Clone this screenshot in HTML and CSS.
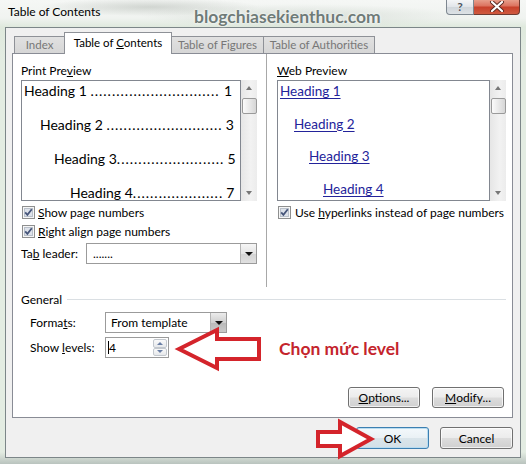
FILE: index.html
```html
<!DOCTYPE html>
<html>
<head>
<meta charset="utf-8">
<title>Table of Contents</title>
<link rel="stylesheet" href="styles.css">
</head>
<body>
<div class="window">
  <div class="titlebar">
    <span class="title">Table of Contents</span>
    <span class="watermark">blogchiasekienthuc.com</span>
    <div class="caption-btns">
      <div class="cap help">?</div>
      <div class="cap close">
        <svg width="16" height="11" viewBox="0 0 16 11">
          <path d="M3 1 L13 10 M13 1 L3 10" stroke="#5a2a22" stroke-width="4" stroke-linecap="round"/>
          <path d="M3 1 L13 10 M13 1 L3 10" stroke="#ffffff" stroke-width="2.2" stroke-linecap="round"/>
        </svg>
      </div>
    </div>
  </div>

  <div class="client">
    <div class="tabs">
      <div class="tab t-index">Index</div>
      <div class="tab active">Table of <u>C</u>ontents</div>
      <div class="tab t-fig">Table of Figures</div>
      <div class="tab t-auth">Table of Authorities</div>
    </div>

    <div class="panel">
      <div class="cols">
        <div class="col col-left">
          <div class="label">Print Pre<u>v</u>iew</div>
          <div class="preview preview-print">
            <div class="list">
              <div class="pline lv1"><span>Heading 1&nbsp;</span><span class="dots">..............................</span><span class="pn">1</span></div>
              <div class="pline lv2"><span>Heading 2&nbsp;</span><span class="dots">...........................</span><span class="pn">3</span></div>
              <div class="pline lv3"><span>Heading 3</span><span class="dots">.........................</span><span class="pn">5</span></div>
              <div class="pline lv4"><span>Heading 4</span><span class="dots">.....................</span><span class="pn">7</span></div>
            </div>
            <div class="scrollbar">
              <div class="sb-btn"><span class="tri-up"></span></div>
              <div class="thumb"></div>
              <div class="sb-fill"></div>
              <div class="sb-btn"><span class="tri-down"></span></div>
            </div>
          </div>
          <div class="check">
            <svg class="cb" width="13" height="13" viewBox="0 0 13 13"><rect x="0.5" y="0.5" width="12" height="12" fill="#f6f6f6" stroke="#8e8f8f"/><rect x="2.5" y="2.5" width="8" height="8" fill="#dde2ea" stroke="#b9c0ca"/><path d="M3.2 6.3 L5.4 8.8 L9.8 3.2" fill="none" stroke="#46557a" stroke-width="1.8"/></svg>
            <span><u>S</u>how page numbers</span>
          </div>
          <div class="check">
            <svg class="cb" width="13" height="13" viewBox="0 0 13 13"><rect x="0.5" y="0.5" width="12" height="12" fill="#f6f6f6" stroke="#8e8f8f"/><rect x="2.5" y="2.5" width="8" height="8" fill="#dde2ea" stroke="#b9c0ca"/><path d="M3.2 6.3 L5.4 8.8 L9.8 3.2" fill="none" stroke="#46557a" stroke-width="1.8"/></svg>
            <span><u>R</u>ight align page numbers</span>
          </div>
          <div class="field-row">
            <span class="leader-label">Ta<u>b</u> leader:</span>
            <div class="combo combo-leader">
              <span class="combo-text">.......</span>
              <span class="combo-btn"><span class="tri-down black"></span></span>
            </div>
          </div>
        </div>

        <div class="col col-right">
          <div class="label"><u>W</u>eb Preview</div>
          <div class="preview preview-web">
            <div class="list">
              <a class="wline lv1">Heading 1</a>
              <a class="wline lv2">Heading 2</a>
              <a class="wline lv3">Heading 3</a>
              <a class="wline lv4">Heading 4</a>
            </div>
            <div class="scrollbar">
              <div class="sb-btn"><span class="tri-up"></span></div>
              <div class="thumb"></div>
              <div class="sb-fill"></div>
              <div class="sb-btn"><span class="tri-down"></span></div>
            </div>
          </div>
          <div class="check">
            <svg class="cb" width="13" height="13" viewBox="0 0 13 13"><rect x="0.5" y="0.5" width="12" height="12" fill="#f6f6f6" stroke="#8e8f8f"/><rect x="2.5" y="2.5" width="8" height="8" fill="#dde2ea" stroke="#b9c0ca"/><path d="M3.2 6.3 L5.4 8.8 L9.8 3.2" fill="none" stroke="#46557a" stroke-width="1.8"/></svg>
            <span>Use <u>h</u>yperlinks instead of page numbers</span>
          </div>
        </div>
      </div>

      <div class="general">
        <span>General</span>
        <span class="rule"></span>
      </div>
      <div class="opt-row">
        <span class="opt-label">Forma<u>t</u>s:</span>
        <div class="combo combo-formats">
          <span class="combo-text">From template</span>
          <span class="combo-btn dark"><span class="tri-down black"></span></span>
        </div>
      </div>
      <div class="opt-row">
        <span class="opt-label">Show <u>l</u>evels:</span>
        <div class="spin">
          <span class="spin-text"><span class="caret"></span>4</span>
          <span class="spin-btns">
            <span class="spin-b"><span class="tri-up blue"></span></span>
            <span class="spin-b"><span class="tri-down blue"></span></span>
          </span>
        </div>
      </div>
      <div class="panel-buttons">
        <div class="btn"><u>O</u>ptions...</div>
        <div class="btn"><u>M</u>odify...</div>
      </div>
    </div>

    <div class="footer">
      <div class="btn default">OK</div>
      <div class="btn">Cancel</div>
    </div>
  </div>

  <svg class="arrow arrow-levels" width="92" height="48" viewBox="0 0 92 48">
    <polygon points="5,24 43,5 43,14 85,14 85,34 43,34 43,43" fill="#ffffff" stroke="#d4242b" stroke-width="4" stroke-linejoin="miter"/>
  </svg>
  <div class="note">Chọn mức level</div>
  <svg class="arrow arrow-ok" width="64" height="44" viewBox="0 0 64 44">
    <polygon points="5,15 27,15 27,5 58,22 27,39 27,29 5,29" fill="#ffffff" stroke="#d4242b" stroke-width="4" stroke-linejoin="miter"/>
  </svg>
</div>
</body>
</html>
```

FILE: styles.css
```css
* { box-sizing: border-box; }

html, body {
  margin: 0;
  padding: 0;
}

body {
  width: 526px;
  height: 464px;
  overflow: hidden;
  font-family: Lato, "Noto Sans", sans-serif;
  font-size: 12px;
  color: #000;
  background: #e4ece3;
}

u { text-decoration: underline; text-underline-offset: 1px; }

.window {
  position: relative;
  width: 526px;
  height: 464px;
  display: flex;
  flex-direction: column;
  padding: 0 5px 6px 5px;
  background:
    radial-gradient(ellipse 110px 9px at 150px 7px, rgba(120,130,120,0.28), rgba(120,130,120,0) 100%),
    radial-gradient(ellipse 160px 12px at 300px 16px, rgba(170,185,170,0.35), rgba(170,185,170,0) 100%),
    linear-gradient(to bottom, #f5f7f5 0, #f0f3f0 18px, #dfe9dd 27px, #e3ece2 60px, #e3ece2 452px, #b9c3be 464px);
}

/* ---------- title bar ---------- */
.titlebar {
  height: 27px;
  display: flex;
  align-items: flex-start;
  padding-left: 3px;
}

.title {
  padding-top: 4px;
  line-height: 16px;
  font-size: 12px;
  color: #000;
}

.watermark {
  position: absolute;
  left: 194px;
  top: 6px;
  font-size: 17.5px;
  font-weight: 700;
  line-height: 22px;
  color: #6f7b78;
  text-shadow: 0 0 3px #ffffff, 0 0 1px #ffffff;
}

.caption-btns {
  margin-left: auto;
  display: flex;
  margin-top: -1px;
  margin-right: 1px;
}

.cap {
  height: 16px;
  display: flex;
  align-items: center;
  justify-content: center;
  border: 1px solid #7d8790;
  border-top: none;
}

.help {
  width: 28px;
  border-radius: 0 0 0 4px;
  background: linear-gradient(to bottom, #f7f8f9 0%, #e2e6ea 50%, #cfd5da 51%, #dde2e6 100%);
  color: #4e5560;
  font-size: 12px;
  font-weight: 700;
  text-shadow: 0 0 1px #fff;
}

.close {
  width: 46px;
  border-color: #6f3a30;
  border-left: none;
  border-radius: 0 0 4px 0;
  background: linear-gradient(to bottom, #e9a592 0%, #dc7460 45%, #c8412b 55%, #cf5a40 100%);
}

/* ---------- client ---------- */
.client {
  height: 431px;
  border: 1px solid #7c8688;
  background: #f0f0f0;
  display: flex;
  flex-direction: column;
}

.tabs {
  height: 25px;
  display: flex;
  align-items: flex-end;
  padding-left: 8px;
  position: relative;
  z-index: 1;
}

.tab {
  height: 17px;
  border: 1px solid #8e9197;
  border-bottom: none;
  background: linear-gradient(to bottom, #e1e1e1, #d6d6d6);
  color: #777777;
  font-size: 11.5px;
  line-height: 15px;
  text-align: center;
  white-space: nowrap;
}

.t-index { width: 51px; }
.t-fig { width: 93px; margin-left: -1px; }
.t-auth { width: 112px; margin-left: -1px; }

.tab.active {
  width: 108px;
  height: 22px;
  margin-left: -1px;
  margin-bottom: -1px;
  background: #ffffff;
  color: #000;
  line-height: 19px;
  position: relative;
  z-index: 2;
}

.panel {
  height: 365px;
  margin: 0 7px 0 6px;
  border: 1px solid #898c95;
  background: #ffffff;
  display: flex;
  flex-direction: column;
}

.cols {
  height: 233px;
  display: grid;
  grid-template-columns: 253px 1fr;
}

.col {
  padding-top: 9px;
}

.col-left { padding-left: 8px; }

.col-right {
  border-left: 1px solid #a8a8a8;
  padding-left: 10px;
  padding-right: 6px;
}

.label {
  line-height: 16px;
  height: 16px;
  margin-bottom: 1px;
}

.preview {
  height: 121px;
  display: flex;
}

.preview-print { width: 236px; }
.preview-web { width: 229px; }

.list {
  flex: 1;
  min-width: 0;
  border: 1px solid #828790;
  background: #fff;
  overflow: hidden;
}

.pline {
  display: flex;
  height: 20px;
  line-height: 20px;
  font-size: 14px;
  white-space: nowrap;
  padding-right: 8px;
  margin-bottom: 14px;
}

.pline .dots {
  letter-spacing: 1px;
}

.pline .pn {
  margin-left: auto;
  padding-left: 3px;
}

.pline.lv1 { padding-left: 2px; }
.pline.lv2 { padding-left: 18px; }
.pline.lv3 { padding-left: 32px; }
.pline.lv4 { padding-left: 48px; }

.wline {
  display: block;
  height: 20px;
  line-height: 20px;
  font-size: 13.5px;
  color: #23239a;
  text-decoration: underline;
  text-underline-offset: 2px;
  margin-bottom: 12.7px;
  width: max-content;
}

.wline.lv1 { margin-left: 2px; }
.wline.lv2 { margin-left: 16px; }
.wline.lv3 { margin-left: 31px; }
.wline.lv4 { margin-left: 45px; }

.scrollbar {
  width: 16px;
  display: flex;
  flex-direction: column;
  align-items: center;
  background: linear-gradient(to right, #e6e6e6, #f2f2f2 60%, #ececec);
}

.sb-btn {
  height: 16px;
  width: 16px;
  display: flex;
  align-items: center;
  justify-content: center;
}

.sb-fill { flex: 1; }

.thumb {
  width: 15px;
  height: 16px;
  margin-top: 2px;
  border: 1px solid #9a9a9a;
  border-radius: 2px;
  background: linear-gradient(to right, #fbfbfb, #e9e9e9 50%, #d6d6d6);
}

.tri-up, .tri-down {
  width: 0;
  height: 0;
  border-left: 3.5px solid transparent;
  border-right: 3.5px solid transparent;
}

.tri-up { border-bottom: 4px solid #777; }
.tri-down { border-top: 4px solid #777; }
.tri-down.black { border-top-color: #111; border-left-width: 4px; border-right-width: 4px; }
.tri-up.blue { border-bottom-color: #6a7fa5; border-left-width: 3px; border-right-width: 3px; border-bottom-width: 3px; }
.tri-down.blue { border-top-color: #6a7fa5; border-left-width: 3px; border-right-width: 3px; border-top-width: 3px; }

.check {
  display: flex;
  align-items: center;
  height: 16px;
  margin-top: 3px;
  padding-left: 1px;
  white-space: nowrap;
}

.cb {
  flex: none;
  margin-right: 3px;
}

.col-right .cb { margin-right: 4px; }

.field-row {
  display: flex;
  align-items: center;
  height: 21px;
  margin-top: 4px;
}

.leader-label { width: 65px; }

.combo {
  height: 21px;
  display: flex;
  align-items: center;
  border: 1px solid #9b9b9b;
  background: #fff;
  padding-left: 6px;
}

.combo-text { flex: 1; }

.combo-leader { width: 171px; }
.combo-formats { width: 122px; padding-left: 5px; }

.combo-btn {
  width: 16px;
  height: 19px;
  display: flex;
  align-items: center;
  justify-content: center;
  border-left: 1px solid #b5b5b5;
  background: linear-gradient(to bottom, #f6f6f6, #e4e4e4 50%, #d3d3d3 51%, #e0e0e0);
}

.combo-btn.dark {
  background: linear-gradient(to bottom, #ececec, #cfcfcf 50%, #b9b9b9 51%, #c9c9c9);
}

/* ---------- general section ---------- */
.general {
  display: flex;
  align-items: center;
  height: 16px;
  margin-top: 4px;
  padding-left: 8px;
  padding-right: 6px;
}

.general .rule {
  flex: 1;
  height: 1px;
  margin-left: 5px;
  background: #dadfe3;
}

.opt-row {
  display: flex;
  align-items: center;
  height: 21px;
  margin-top: 5px;
  padding-left: 17px;
}

.opt-row + .opt-row { margin-top: 4px; }

.opt-label { width: 75px; }

.spin {
  width: 64px;
  height: 21px;
  display: flex;
  border: 1px solid #9b9b9b;
  background: #fff;
}

.spin-text {
  flex: 1;
  display: flex;
  align-items: center;
  padding-left: 2px;
}

.caret {
  width: 1px;
  height: 13px;
  background: #000;
}

.spin-btns {
  width: 15px;
  display: flex;
  flex-direction: column;
  padding: 1px 1px 1px 0;
}

.spin-b {
  flex: 1;
  display: flex;
  align-items: center;
  justify-content: center;
  border: 1px solid #c3c8ce;
  border-radius: 2px;
  background: linear-gradient(to bottom, #fafafa, #e6e8eb);
}

.panel-buttons {
  margin-top: auto;
  margin-bottom: 9px;
  display: flex;
  justify-content: flex-end;
  gap: 12px;
  padding-right: 8px;
}

.btn {
  width: 72px;
  height: 21px;
  display: flex;
  align-items: center;
  justify-content: center;
  border: 1px solid #707070;
  border-radius: 3px;
  background: linear-gradient(to bottom, #f4f4f4 0%, #ececec 48%, #dcdcdc 52%, #d0d0d0 100%);
  box-shadow: inset 0 0 0 1px rgba(255,255,255,0.7);
  color: #000;
  white-space: nowrap;
}

/* ---------- footer ---------- */
.footer {
  flex: 1;
  display: flex;
  justify-content: flex-end;
  align-items: flex-start;
  gap: 11px;
  padding-top: 9px;
  padding-right: 7px;
}

.footer .btn {
  width: 73px;
  height: 22px;
}

.btn.default {
  border-color: #3c7fb1;
  background: linear-gradient(to bottom, #f3f8fb 0%, #eaf1f5 48%, #d9e4ea 52%, #d4e0e7 100%);
  box-shadow: inset 0 0 0 1px #b8dcf0;
}

/* ---------- annotations ---------- */
.arrow {
  position: absolute;
  overflow: visible;
}

.arrow-levels { left: 174px; top: 325px; }
.arrow-ok { left: 313px; top: 417px; }

.note {
  position: absolute;
  left: 279px;
  top: 338px;
  line-height: 22px;
  font-size: 17.5px;
  font-weight: 700;
  color: #c4242c;
  white-space: nowrap;
}
```
